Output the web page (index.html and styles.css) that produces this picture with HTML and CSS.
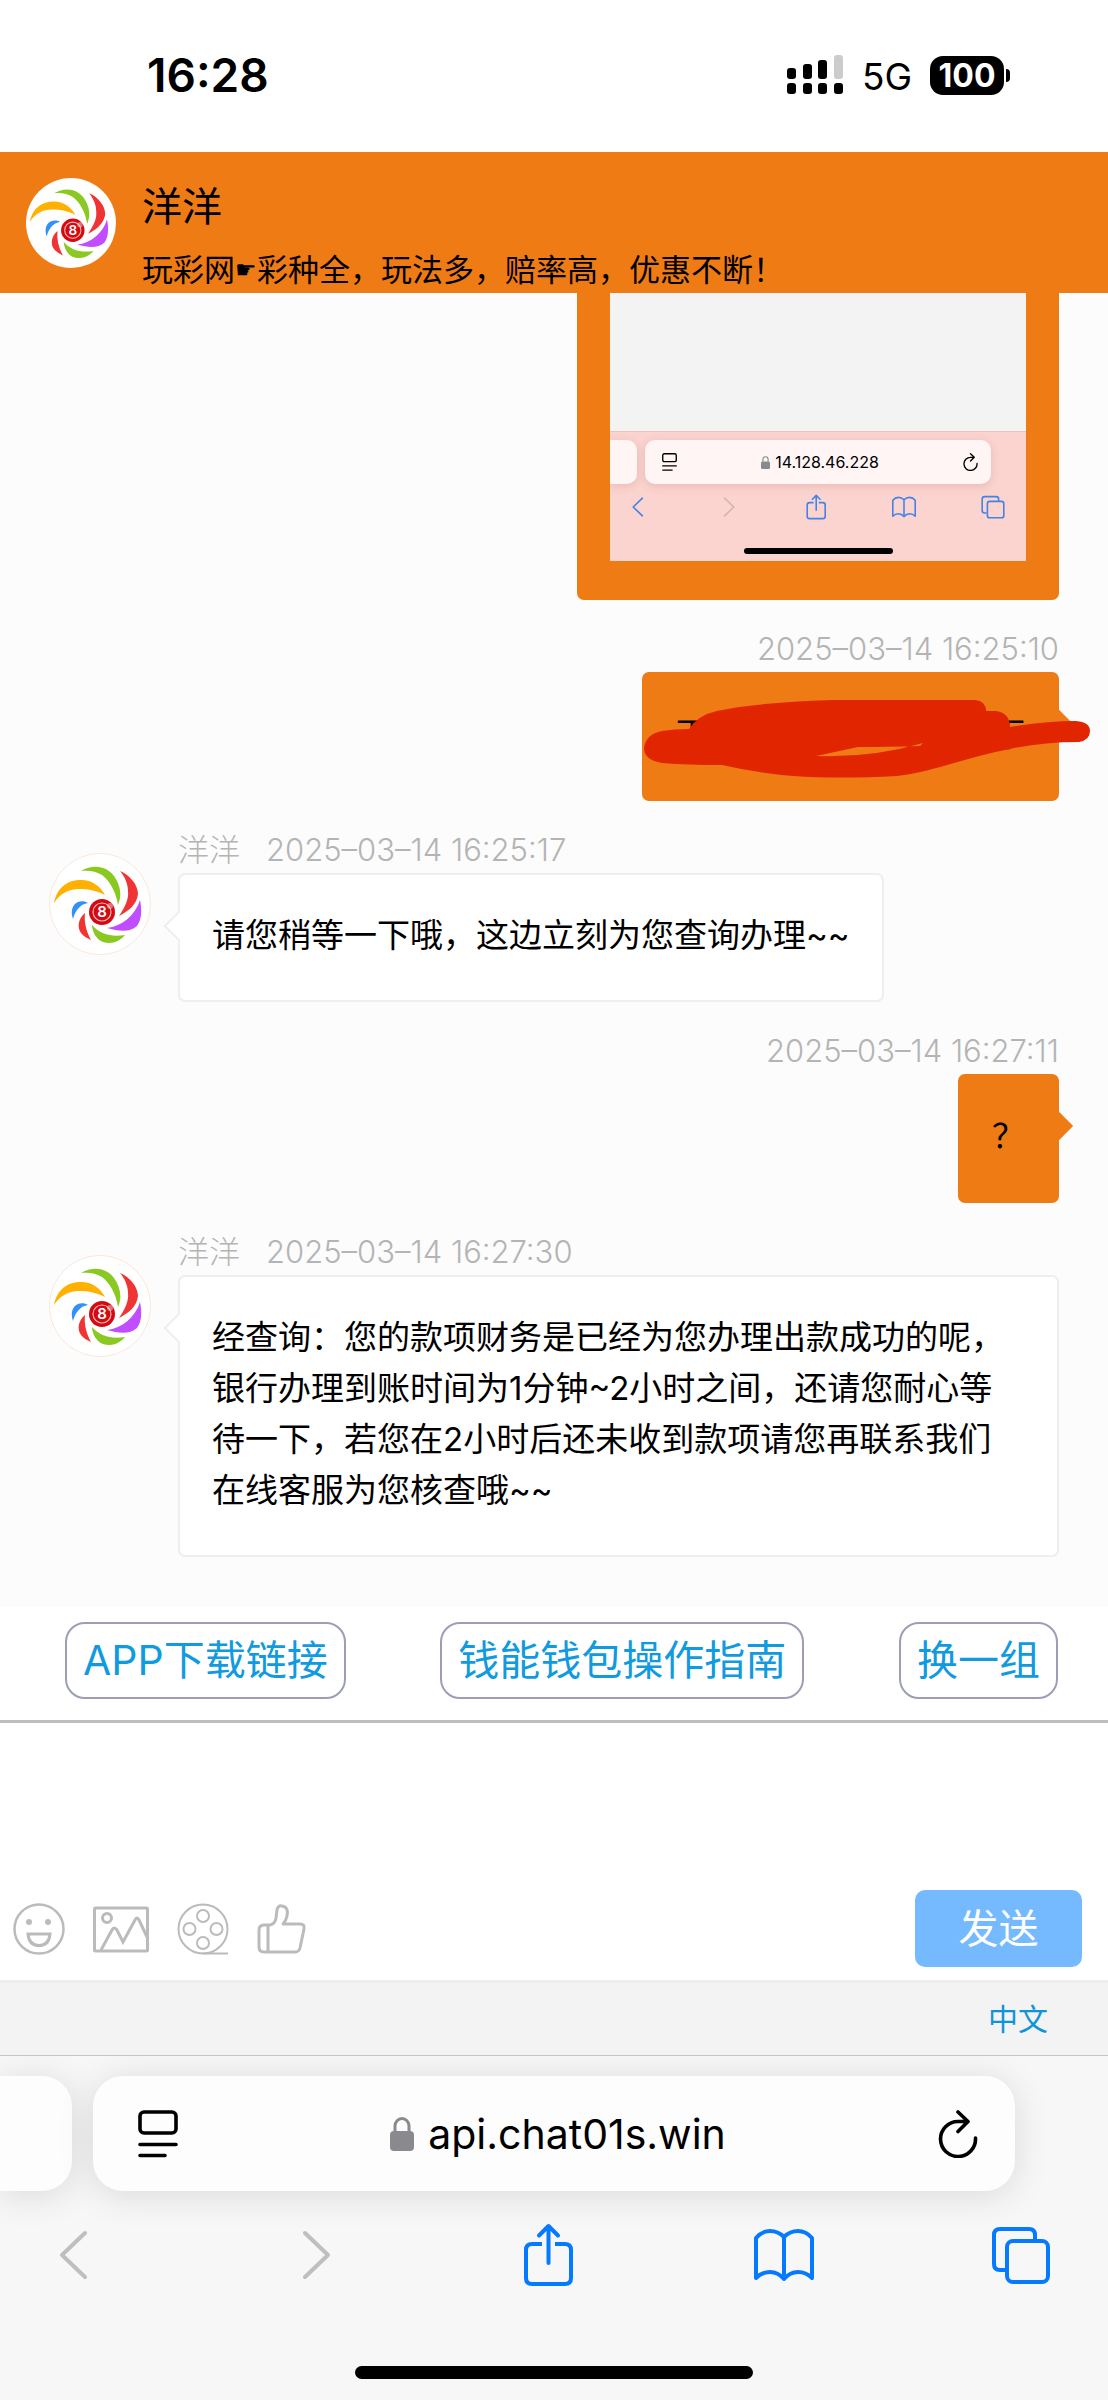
FILE: index.html
```html
<!doctype html>
<html lang="zh-CN">
<head>
	<meta charset="UTF-8">
	<title>在线客服</title>
	<meta name="viewport" content="width=device-width, initial-scale=1">
	<link rel="stylesheet" href="styles.css">
</head>
<body>
	<!-- shared icons -->
	<svg class="sprite" aria-hidden="true">
		<symbol id="logo" viewBox="0 0 100 100">
			<circle cx="50" cy="50" r="50" fill="#fff"/>
			<path fill="#8ac922" d="M31 17C44 9 58 13 64 22C71 32 72 42 68 51C66 38 60 27 52 21C46 17 38 16 31 17Z"/>
			<path fill="#f03434" d="M70 17C80 21 88 31 88 40C87 50 79 57 69 62C75 53 79 45 78 37C78 30 75 23 70 17Z"/>
			<path fill="#c04dff" d="M90 46C92 56 92 65 87 72C79 79 68 77 57 74C72 72 85 62 90 46Z"/>
			<path fill="#ffb000" d="M4 49C7 33 18 26 31 26C42 26 50 32 55 41C45 36 38 35 29 35C18 35 10 40 4 49Z"/>
			<path fill="#3290fa" d="M23 65C20 56 23 50 28 48C31 47 35 47 38 49C30 50 25 57 23 65Z"/>
			<path fill="#f03434" d="M35 59C28 65 27 73 31 79C33 82 37 84 41 86C36 77 34 68 35 59Z"/>
			<path fill="#8ac922" d="M42 71C42 78 47 86 53 88C62 91 70 87 75 81C62 83 51 81 42 71Z"/>
			<circle cx="52" cy="58" r="13" fill="#d40a12"/>
			<circle cx="52" cy="58" r="9" fill="none" stroke="#f6b9b9" stroke-width="1.2"/>
			<circle cx="60" cy="52" r="3" fill="#fff" opacity=".4"/>
		</symbol>
		<symbol id="reader" viewBox="0 0 40 48">
			<g fill="none" stroke="currentColor" stroke-width="3.6" stroke-linecap="round">
				<rect x="2" y="2" width="36" height="21" rx="4"/>
				<path d="M2 34.500H38M2 45.500H27"/>
			</g>
		</symbol>
		<symbol id="lock" viewBox="0 0 24 34">
			<rect y="14" width="24" height="20" rx="4" fill="#8a898e"/>
			<path d="M5 15V9a7 7.500 0 0 1 14 0V15" fill="none" stroke="#8a898e" stroke-width="3"/>
		</symbol>
		<symbol id="reload" viewBox="0 0 40 48">
			<path d="M29 11.500H20A17.500 17.500 0 1 0 37.500 28M20 2l10 9.500-10 10" fill="none" stroke="currentColor" stroke-width="3.600" stroke-linecap="round" stroke-linejoin="round"/>
		</symbol>
		<symbol id="back" viewBox="0 0 60 64">
			<path d="M41 10L18 32L41 54" fill="none" stroke="currentColor" stroke-width="4" stroke-linecap="round" stroke-linejoin="round"/>
		</symbol>
		<symbol id="forward" viewBox="0 0 60 64">
			<path d="M24 10L47 32L24 54" fill="none" stroke="currentColor" stroke-width="4" stroke-linecap="round" stroke-linejoin="round"/>
		</symbol>
		<symbol id="share" viewBox="0 0 60 64">
			<g fill="none" stroke="currentColor" stroke-width="4" stroke-linecap="round" stroke-linejoin="round">
				<path stroke-linecap="butt" d="M24 21H14Q8 21 8 27V55Q8 61 14 61H47Q53 61 53 55V27Q53 21 47 21H37"/>
				<path d="M30.500 40V3M21 12.500L30.500 3L40 12.500"/>
			</g>
		</symbol>
		<symbol id="book" viewBox="0 0 60 64">
			<path d="M30 14Q24 8 16 8T2 15V55Q8 49 16 49T30 56Q36 49 44 49T58 55V15Q52 8 44 8T30 14V56" fill="none" stroke="currentColor" stroke-width="4" stroke-linecap="round" stroke-linejoin="round"/>
		</symbol>
		<symbol id="tabs" viewBox="0 0 60 64">
			<g fill="none" stroke="currentColor" stroke-width="4">
				<rect x="16" y="18" width="41" height="41" rx="6"/>
				<path d="M14 47H9Q3 47 3 41V12Q3 6 9 6H38Q44 6 44 12V17"/>
			</g>
		</symbol>
	</svg>

	<div class="status">
		<span class="clock">16:28</span>
		<div class="status-right">
			<svg class="signal" viewBox="0 0 56 40">
				<rect x="0" y="13" width="9" height="11" rx="3"/>
				<rect x="16" y="9" width="9" height="15" rx="3"/>
				<rect x="31" y="5" width="9" height="19" rx="3"/>
				<rect x="47" y="0" width="9" height="24" rx="3" fill="#ccc"/>
				<rect x="0" y="28" width="9" height="11" rx="3"/>
				<rect x="16" y="28" width="9" height="11" rx="3"/>
				<rect x="31" y="28" width="9" height="11" rx="3"/>
				<rect x="47" y="28" width="9" height="11" rx="3"/>
			</svg>
			<span class="network">5G</span>
			<span class="battery">100</span>
		</div>
	</div>

	<header class="agent">
		<svg class="agent-logo" viewBox="0 0 100 100"><use href="#logo"/><text x="52" y="63">8</text></svg>
		<div>
			<h1>洋洋</h1>
			<p>玩彩网<span class="hand">☛</span>彩种全，玩法多，赔率高，优惠不断！</p>
		</div>
	</header>

	<main class="chat">
		<div class="msg mine">
			<div class="bubble picture">
				<div class="shot">
					<div class="shot-page"></div>
					<div class="shot-bar">
						<div class="shot-tabs">
							<span class="shot-prev"></span>
							<span class="shot-url">
								<svg class="shot-icon"><use href="#reader"/></svg>
								<span class="shot-host"><svg class="shot-lock"><use href="#lock"/></svg>14.128.46.228</span>
								<svg class="shot-icon"><use href="#reload"/></svg>
							</span>
						</div>
						<div class="shot-nav">
							<svg><use href="#back"/></svg>
							<svg class="off"><use href="#forward"/></svg>
							<svg><use href="#share"/></svg>
							<svg><use href="#book"/></svg>
							<svg><use href="#tabs"/></svg>
						</div>
						<div class="shot-home"></div>
					</div>
				</div>
			</div>
		</div>

		<div class="msg mine">
			<div class="meta">2025–03–14 16:25:10</div>
			<div class="bubble covered">
				<span>下</span><span>下</span>
				<svg class="scribble" viewBox="0 0 450 80">
					<path fill="#e12500" fill-rule="evenodd" d="M20 31Q32 29 47 29Q56 15 75 11Q110 3 190 0H333Q344 1 344 11H354Q368 13 368 27Q405 21 434 21Q448 22 448 31T437 42Q400 42 368 49C325 57 290 72 255 76Q195 79 152 76Q115 73 80 65Q45 65 20 63Q2 60 2 48Q4 34 20 31ZM174 56Q230 58 281 43L278 46Q245 47 216 47Z"/>
				</svg>
			</div>
		</div>

		<div class="msg">
			<svg class="avatar" viewBox="0 0 100 100"><use href="#logo"/><text x="52" y="63">8</text></svg>
			<div class="body">
				<div class="meta"><span>洋洋</span><span>2025–03–14 16:25:17</span></div>
				<div class="bubble">请您稍等一下哦，这边立刻为您查询办理~~</div>
			</div>
		</div>

		<div class="msg mine">
			<div class="meta">2025–03–14 16:27:11</div>
			<div class="bubble">？</div>
		</div>

		<div class="msg">
			<svg class="avatar" viewBox="0 0 100 100"><use href="#logo"/><text x="52" y="63">8</text></svg>
			<div class="body">
				<div class="meta"><span>洋洋</span><span>2025–03–14 16:27:30</span></div>
				<div class="bubble long">经查询：您的款项财务是已经为您办理出款成功的呢，<br>银行办理到账时间为1分钟~2小时之间，还请您耐心等<br>待一下，若您在2小时后还未收到款项请您再联系我们<br>在线客服为您核查哦~~</div>
			</div>
		</div>
	</main>

	<div class="quick">
		<button type="button">APP下载链接</button>
		<button type="button">钱能钱包操作指南</button>
		<button type="button">换一组</button>
	</div>

	<form class="editor">
		<textarea aria-label="消息"></textarea>
		<div class="tools">
			<button type="button" aria-label="表情">
				<svg viewBox="0 0 52 52"><g fill="none" stroke="#bbb" stroke-width="2.500"><circle cx="26" cy="26" r="24.500"/><path d="M15 31H37Q36 42.500 26 42.500T15 31Z" stroke-width="3"/></g><circle cx="16" cy="19" r="3" fill="#bbb"/><circle cx="35" cy="19" r="3" fill="#bbb"/></svg>
			</button>
			<button type="button" aria-label="图片" class="wide">
				<svg viewBox="0 0 56 52"><g fill="none" stroke="#bbb" stroke-width="3"><rect x="1.500" y="5" width="53" height="43" rx="1"/><circle cx="14" cy="15" r="4.500"/><path d="M8 47L19 27Q21 23 24 27L30 39L42 17Q44 13 46 17L55 36"/></g></svg>
			</button>
			<button type="button" aria-label="视频">
				<svg viewBox="0 0 52 52"><g fill="none" stroke="#bbb" stroke-width="2"><circle cx="26" cy="26" r="24.500"/><circle cx="26" cy="13" r="6"/><circle cx="26" cy="40" r="6"/><circle cx="12.500" cy="26" r="6"/><circle cx="39.500" cy="26" r="6"/><path d="M26 50.500H51"/></g></svg>
			</button>
			<button type="button" aria-label="评价">
				<svg viewBox="0 0 52 52"><path d="M12 22V49M27 21H44Q49 21 48 26L44 45Q43 49 39 49H8Q3 49 3 44V27Q3 22 8 22H14Q19 21 20 15L21 7Q22 2 26 3Q33 4 31 13Q30 18 27 21Z" fill="none" stroke="#bbb" stroke-width="3" stroke-linejoin="round"/></svg>
			</button>
			<button type="submit" class="send">发送</button>
		</div>
	</form>

	<div class="lang"><a href="#">中文</a></div>

	<footer class="browser">
		<div class="browser-tabs">
			<span class="prev-tab"></span>
			<div class="url">
				<button type="button" aria-label="阅读"><svg><use href="#reader"/></svg></button>
				<span class="host"><svg class="lock"><use href="#lock"/></svg>api.chat01s.win</span>
				<button type="button" aria-label="刷新"><svg><use href="#reload"/></svg></button>
			</div>
		</div>
		<nav class="browser-nav">
			<button type="button" class="off" aria-label="后退"><svg><use href="#back"/></svg></button>
			<button type="button" class="off" aria-label="前进"><svg><use href="#forward"/></svg></button>
			<button type="button" aria-label="分享"><svg><use href="#share"/></svg></button>
			<button type="button" aria-label="书签"><svg><use href="#book"/></svg></button>
			<button type="button" aria-label="标签页"><svg><use href="#tabs"/></svg></button>
		</nav>
		<div class="home"></div>
	</footer>
</body>
</html>
```

FILE: styles.css
```css
*{
	margin: 0;
	padding: 0;
	box-sizing: border-box;
}
body{
	background: #fff;
	color: #000;
	font-family: Inter, "Noto Sans CJK SC", sans-serif;
}
svg{
	display: block;
	flex: none;
}
button{
	background: none;
	border: 0;
	color: inherit;
	font-family: inherit;
}
.sprite{
	position: absolute;
	width: 0;
	height: 0;
}

/* status bar */
.status{
	display: flex;
	justify-content: space-between;
	align-items: center;
	height: 152px;
	padding: 0 104px 2px 147px;
}
.clock{
	font-size: 46px;
	font-weight: 600;
}
.status-right{
	display: flex;
	align-items: center;
}
.signal{
	width: 56px;
	height: 40px;
}
.network{
	margin: 2px 18px 0 19px;
	font-size: 37px;
}
.battery{
	position: relative;
	width: 74px;
	border-radius: 13px;
	background: #000;
	color: #fff;
	font-size: 32px;
	font-weight: 700;
	line-height: 39px;
	text-align: center;
}
.battery::after{
	content: "";
	position: absolute;
	right: -6px;
	top: 13px;
	width: 4px;
	height: 13px;
	border-radius: 0 4px 4px 0;
	background: #000;
}

/* agent header */
.agent{
	display: flex;
	gap: 26px;
	padding: 25px 26px 0;
	background: #ef7b14;
}
.agent-logo{
	width: 90px;
	height: 90px;
	margin-top: 1px;
}
.agent-logo text, .avatar text{
	fill: #fff;
	font-size: 15px;
	font-weight: 600;
	text-anchor: middle;
}
.agent h1{
	margin-bottom: 10px;
	font-size: 40px;
	font-weight: 400;
	line-height: 60px;
}
.agent p{
	display: flex;
	font-size: 31px;
	line-height: 46px;
}
.hand{
	font-size: 24px;
}

/* messages */
.chat{
	padding: 0 49px 50px;
	background: #fcfcfc;
}
.msg{
	display: flex;
	align-items: flex-start;
	gap: 27px;
}
.mine{
	flex-direction: column;
	align-items: flex-end;
	gap: 0;
}
.body{
	flex: 1;
}
.meta{
	display: flex;
	gap: 26px;
	margin-top: 26px;
	color: #b4b4b4;
	font-size: 31px;
	font-weight: 300;
	line-height: 46px;
}
.avatar{
	width: 102px;
	height: 102px;
	margin-top: 52px;
	border: 1px solid #fae6d6;
	border-radius: 50%;
}
.bubble{
	position: relative;
	width: fit-content;
	padding: 35px 32px 39px;
	border: 2px solid #eee;
	border-radius: 7px;
	background: #fff;
	font-size: 33px;
	line-height: 51px;
}
.long{
	width: auto;
}
.bubble::before{
	content: "";
	position: absolute;
	left: -12px;
	top: 40px;
	width: 20px;
	height: 20px;
	border: solid #eee;
	border-width: 0 0 2px 2px;
	background: #fff;
	transform: rotate(45deg);
}
.mine .bubble{
	border-color: #ef7b14;
	background: #ef7b14;
}
.mine .bubble::before{
	left: auto;
	right: -12px;
	border: 0;
	background: #ef7b14;
}
.mine .picture{
	padding: 0 31px 37px;
	border-top: 0;
	border-radius: 0 0 7px 7px;
}
.mine .picture::before{
	display: none;
}
.covered{
	display: flex;
	justify-content: space-between;
	width: 417px;
}
.scribble{
	position: absolute;
	left: -2px;
	top: 26px;
	width: 450px;
	height: 80px;
}

/* picture that was sent */
.shot{
	width: 416px;
	overflow: hidden;
	background: #fbd4cf;
}
.shot-page{
	height: 139px;
	border-bottom: 1px solid #e8c4c2;
	background: #f3f3f3;
}
.shot-bar{
	padding: 8px 0 7px;
}
.shot-tabs{
	display: flex;
	gap: 8px;
}
.shot-prev, .shot-url{
	height: 44px;
	background: #fff5f4;
	box-shadow: 0 2px 10px rgba(150, 60, 60, .18);
}
.shot-prev{
	width: 27px;
	border-radius: 0 10px 10px 0;
}
.shot-url{
	display: flex;
	align-items: center;
	justify-content: space-between;
	width: 346px;
	padding: 0 13px 0 17px;
	border-radius: 10px;
	font-size: 16px;
}
.shot-icon{
	width: 15px;
	height: 18px;
}
.shot-host{
	display: flex;
	align-items: center;
	gap: 5px;
}
.shot-lock{
	width: 9px;
	height: 13px;
}
.shot-nav{
	display: flex;
	justify-content: space-between;
	margin-top: 10px;
	padding: 0 21px 0 16px;
	color: #4482e8;
}
.shot-nav svg{
	width: 24px;
	height: 26px;
}
.shot-nav .off{
	color: #d4b4b2;
}
.shot-home{
	width: 149px;
	height: 6px;
	margin: 28px auto 0;
	border-radius: 3px;
	background: #000;
}

/* quick replies */
.quick{
	display: flex;
	justify-content: space-between;
	padding: 15px 50px 21px 65px;
	border-bottom: 3px solid #bdbdbd;
}
.quick button{
	padding: 0 16px;
	border: 2px solid #9c9eb8;
	border-radius: 20px;
	color: #109ae0;
	font-size: 41px;
	line-height: 73px;
}

/* editor */
.editor textarea{
	display: block;
	width: 100%;
	height: 167px;
	border: 0;
	outline: 0;
	resize: none;
	font-size: 33px;
}
.tools{
	display: flex;
	align-items: center;
	gap: 27px;
	padding: 0 26px 13px 13px;
}
.tools svg{
	width: 52px;
	height: 52px;
}
.tools .wide svg{
	width: 58px;
}
.tools .send{
	margin-left: auto;
	width: 167px;
	border-radius: 10px;
	background: #75b9ff;
	color: #fff;
	font-size: 40px;
	line-height: 77px;
}
.lang{
	display: flex;
	justify-content: flex-end;
	padding-right: 60px;
	border-top: 3px solid #ededed;
	background: #f3f3f3;
	line-height: 72px;
}
.lang a{
	color: #1094d8;
	font-size: 30px;
	text-decoration: none;
}

/* browser bar */
.browser{
	padding: 20px 0 21px;
	border-top: 1px solid #c4c4c6;
	background: #f7f7f8;
	overflow: hidden;
}
.browser-tabs{
	display: flex;
	gap: 21px;
	margin-right: 93px;
}
.prev-tab, .url{
	height: 115px;
	background: #fdfdfd;
	box-shadow: 0 4px 36px rgba(0, 0, 0, .12);
}
.prev-tab{
	width: 72px;
	border-radius: 0 30px 30px 0;
}
.url{
	flex: 1;
	display: flex;
	align-items: center;
	justify-content: space-between;
	padding: 0 37px 0 45px;
	border-radius: 30px;
}
.url button svg{
	width: 40px;
	height: 48px;
}
.host{
	display: flex;
	align-items: center;
	gap: 14px;
	font-size: 41px;
}
.lock{
	width: 24px;
	height: 34px;
}
.browser-nav{
	display: flex;
	justify-content: space-between;
	margin-top: 32px;
	padding: 0 57px 0 44px;
	color: #067aff;
}
.browser-nav svg{
	width: 60px;
	height: 64px;
}
.browser-nav .off{
	color: #bfbfbf;
}
.home{
	width: 36%;
	height: 13px;
	margin: 79px auto 0;
	border-radius: 7px;
	background: #000;
}
```
